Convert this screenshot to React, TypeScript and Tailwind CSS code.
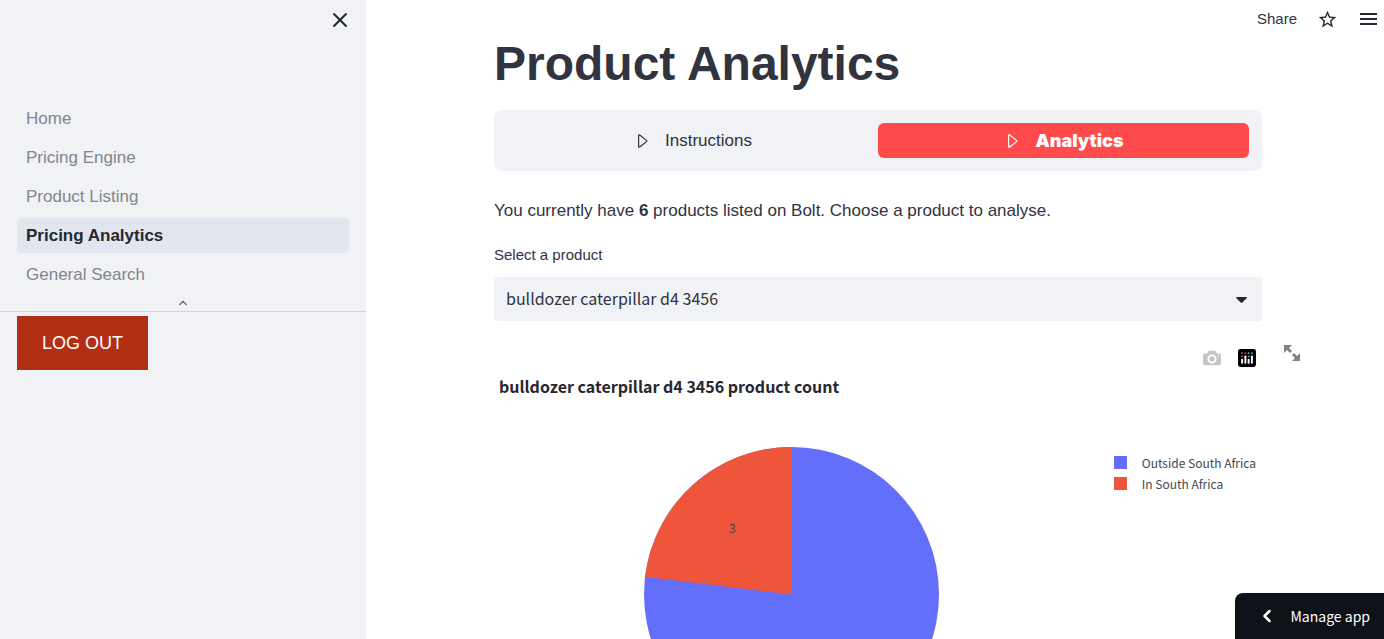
import clsx from "clsx";
import { ChevronLeft, ChevronUp, X } from "lucide-react";
import { MdStarBorder } from "react-icons/md";

const NAV_ITEMS = ["Home", "Pricing Engine", "Product Listing", "Pricing Analytics", "General Search"];

const COUNTS = [
  { label: "Outside South Africa", value: 10, swatch: "bg-[#636efa]" },
  { label: "In South Africa", value: 3, swatch: "bg-[#ef553b]" },
];

function Sidebar() {
  return (
    <aside className="flex w-[366px] shrink-0 flex-col bg-[#f0f2f6]">
      <div className="flex h-[101px] items-start justify-end px-3.5 pt-2">
        <button type="button" aria-label="Close sidebar" className="text-[#262730]">
          <X size={24} strokeWidth={2} />
        </button>
      </div>

      <nav className="flex flex-col gap-1 px-[17px]">
        {NAV_ITEMS.map((item) => (
          <a
            key={item}
            href="#"
            className={clsx(
              "rounded px-[9px] text-[17px] leading-[35px]",
              item === "Pricing Analytics" ? "bg-[#e2e6ee] font-bold text-[#262730]" : "text-[#83868e]"
            )}
          >
            {item}
          </a>
        ))}
      </nav>

      <button
        type="button"
        aria-label="Collapse navigation"
        className="flex h-5 items-center justify-center border-b border-[#d3d5da] pt-0.5 text-[#6b6e77]"
      >
        <ChevronUp size={14} strokeWidth={2} />
      </button>

      <div className="px-[17px] pt-1">
        <button type="button" className="bg-[#b22e14] px-[25px] text-lg leading-[54px] text-white">
          LOG OUT
        </button>
      </div>
    </aside>
  );
}

function Toolbar() {
  return (
    <header className="absolute right-0 top-0 flex h-[38px] items-center pr-[7px] text-[#262730]">
      <button type="button" className="text-[15px] text-[#31333f]">
        Share
      </button>
      <button type="button" aria-label="Favourite" className="ml-5">
        <MdStarBorder size={21} />
      </button>
      <button type="button" aria-label="Menu" className="ml-[22px]">
        <svg width="17" height="12" viewBox="0 0 17 12" stroke="currentColor" strokeWidth="2">
          <path d="M0 1h17M0 6h17M0 11h17" />
        </svg>
      </button>
    </header>
  );
}

function CaretIcon() {
  return (
    <svg
      width="18"
      height="18"
      viewBox="0 0 18 18"
      fill="none"
      stroke="currentColor"
      strokeWidth="1.2"
      strokeLinejoin="round"
    >
      <path d="M5.600 3.600v10.800c0 .7.6 1 1.100.6l6.800-5.400c.4-.3.4-.9 0-1.200L6.700 3c-.5-.4-1.100-.1-1.100.6z" />
    </svg>
  );
}

function Tabs() {
  return (
    <div className="mt-4 grid grid-cols-2 rounded-lg bg-[#f0f2f6] p-[13px]">
      <button
        type="button"
        className="flex h-[35px] items-center justify-center gap-3.5 text-[17px] text-[#31333f]"
      >
        <CaretIcon />
        Instructions
      </button>
      <button
        type="button"
        className="flex h-[35px] items-center justify-center gap-3.5 rounded-md bg-[#ff4b4b] text-white"
      >
        <CaretIcon />
        <span className="font-['Inter'] text-lg font-black">Analytics</span>
      </button>
    </div>
  );
}

function CameraIcon() {
  return (
    <svg width="18" height="18" viewBox="0 0 1000 1000" fill="#c5c5c7">
      <path
        transform="matrix(1 0 0 -1 0 850)"
        d="m500 450c-83 0-150-67-150-150 0-83 67-150 150-150 83 0 150 67 150 150 0 83-67 150-150 150z m400 150h-120c-16 0-34 13-39 29l-31 93c-6 15-23 28-40 28h-340c-16 0-34-13-39-28l-31-94c-6-15-23-28-40-28h-120c-55 0-100-45-100-100v-450c0-55 45-100 100-100h800c55 0 100 45 100 100v450c0 55-45 100-100 100z m-400-550c-138 0-250 112-250 250 0 138 112 250 250 250 138 0 250-112 250-250 0-138-112-250-250-250z m365 380c-19 0-35 16-35 35 0 19 16 35 35 35 19 0 35-16 35-35 0-19-16-35-35-35z"
      />
    </svg>
  );
}

function PlotlyIcon() {
  return (
    <svg width="18" height="18" viewBox="0 0 132 132">
      <rect width="132" height="132" rx="18" />
      <g fill="#4dc4cf">
        <circle cx="102" cy="30" r="7" />
        <circle cx="78" cy="30" r="7" />
      </g>
      <circle cx="78" cy="54" r="7" fill="#9b8fd9" />
      <g fill="#ef3f6e">
        <circle cx="54" cy="30" r="7" />
        <circle cx="30" cy="30" r="7" />
        <circle cx="30" cy="54" r="7" />
      </g>
      <g fill="#fff">
        <rect x="23" y="72" width="14" height="37" rx="6" />
        <rect x="71" y="72" width="14" height="37" rx="6" />
        <rect x="47" y="48" width="14" height="61" rx="6" />
        <rect x="95" y="48" width="14" height="61" rx="6" />
      </g>
    </svg>
  );
}

function PieChart() {
  const total = COUNTS.reduce((sum, c) => sum + c.value, 0);
  // the red slice runs anticlockwise from twelve o'clock
  const angle = (COUNTS[1].value / total) * 2 * Math.PI;
  const x = 147 - 147 * Math.sin(angle);
  const y = 147 - 147 * Math.cos(angle);

  return (
    <svg width="295" height="295" viewBox="0 0 294 294" className="shrink-0" role="img" aria-label="Product count">
      <circle cx="147" cy="147" r="147" fill="#636efa" />
      <path d={`M147 147V0A147 147 0 0 0 ${x} ${y}Z`} fill="#ef553b" />
      <text x="88" y="86" textAnchor="middle" fontSize="12" fill="#444" className="font-['Noto_Sans_CJK_SC']">
        {COUNTS[1].value}
      </text>
    </svg>
  );
}

function ProductChart() {
  return (
    <section className="relative mt-7 font-['Noto_Sans_CJK_SC',sans-serif]">
      <div className="flex justify-end gap-[17px] pr-1.5">
        <button type="button" aria-label="Download plot as a png">
          <CameraIcon />
        </button>
        <button type="button" aria-label="Produced with Plotly">
          <PlotlyIcon />
        </button>
      </div>
      <button type="button" aria-label="View fullscreen" className="absolute -right-[38px] -top-1 text-[#808289]">
        <svg width="16" height="16" viewBox="0 0 8 8" fill="currentColor">
          <path d="M0 0v4l1.5-1.5 1.5 1.5 1-1-1.5-1.5 1.5-1.5h-4zm5 4l-1 1 1.5 1.5-1.5 1.5h4v-4l-1.5 1.5-1.5-1.5z" />
        </svg>
      </button>

      <h2 className="mt-[7px] pl-[5px] text-base font-bold leading-6 text-[#262730]">
        bulldozer caterpillar d4 3456 product count
      </h2>

      <div className="mt-[49px] flex items-start justify-between pl-[150px] pr-1.5">
        <PieChart />
        <ul className="mt-[5px] text-xs text-[#444650]">
          {COUNTS.map((c) => (
            <li key={c.label} className="flex h-[21px] items-center gap-[15px]">
              <span className={clsx("size-[13px]", c.swatch)} />
              {c.label}
            </li>
          ))}
        </ul>
      </div>
    </section>
  );
}

export default function App() {
  return (
    <div className="flex h-screen overflow-hidden bg-white font-['Liberation_Sans',Arial,sans-serif] text-[#31333f]">
      <Sidebar />

      <main className="relative min-w-0 flex-1 overflow-y-auto pl-1.5 [scrollbar-width:none]">
        <Toolbar />

        <div className="mx-auto max-w-3xl pb-20 pt-[34px]">
          <h1 className="text-5xl font-bold leading-[60px]">Product Analytics</h1>

          <Tabs />

          <p className="mt-[26px] text-[17px] leading-7">
            You currently have <strong>6</strong> products listed on Bolt. Choose a product to analyse.
          </p>

          <label htmlFor="product" className="mb-2.5 mt-[18px] block text-[15px] leading-6">
            Select a product
          </label>
          <div className="relative">
            <select
              id="product"
              className="h-11 w-full appearance-none rounded bg-[#f0f2f6] px-3 pb-0.5 font-['Noto_Sans_CJK_SC',sans-serif] text-base"
            >
              <option>bulldozer caterpillar d4 3456</option>
            </select>
            <svg
              width="11"
              height="6"
              viewBox="0 0 11 6"
              fill="#262730"
              className="pointer-events-none absolute right-[15px] top-5"
            >
              <path d="M1 0h9c.8 0 1.1.8.6 1.3L6.300 5.500c-.5.5-1.100.5-1.600 0L.4 1.300C-.1.8.200 0 1 0z" />
            </svg>
          </div>

          <ProductChart />
        </div>
      </main>

      <button
        type="button"
        className="fixed bottom-0 right-0 flex h-[46px] items-center gap-3.5 rounded-tl-lg bg-[#0e1117] pl-[22px] pr-3.5 font-['Noto_Sans_CJK_SC',sans-serif] text-sm text-white"
      >
        <ChevronLeft size={20} strokeWidth={3} />
        Manage app
      </button>
    </div>
  );
}
